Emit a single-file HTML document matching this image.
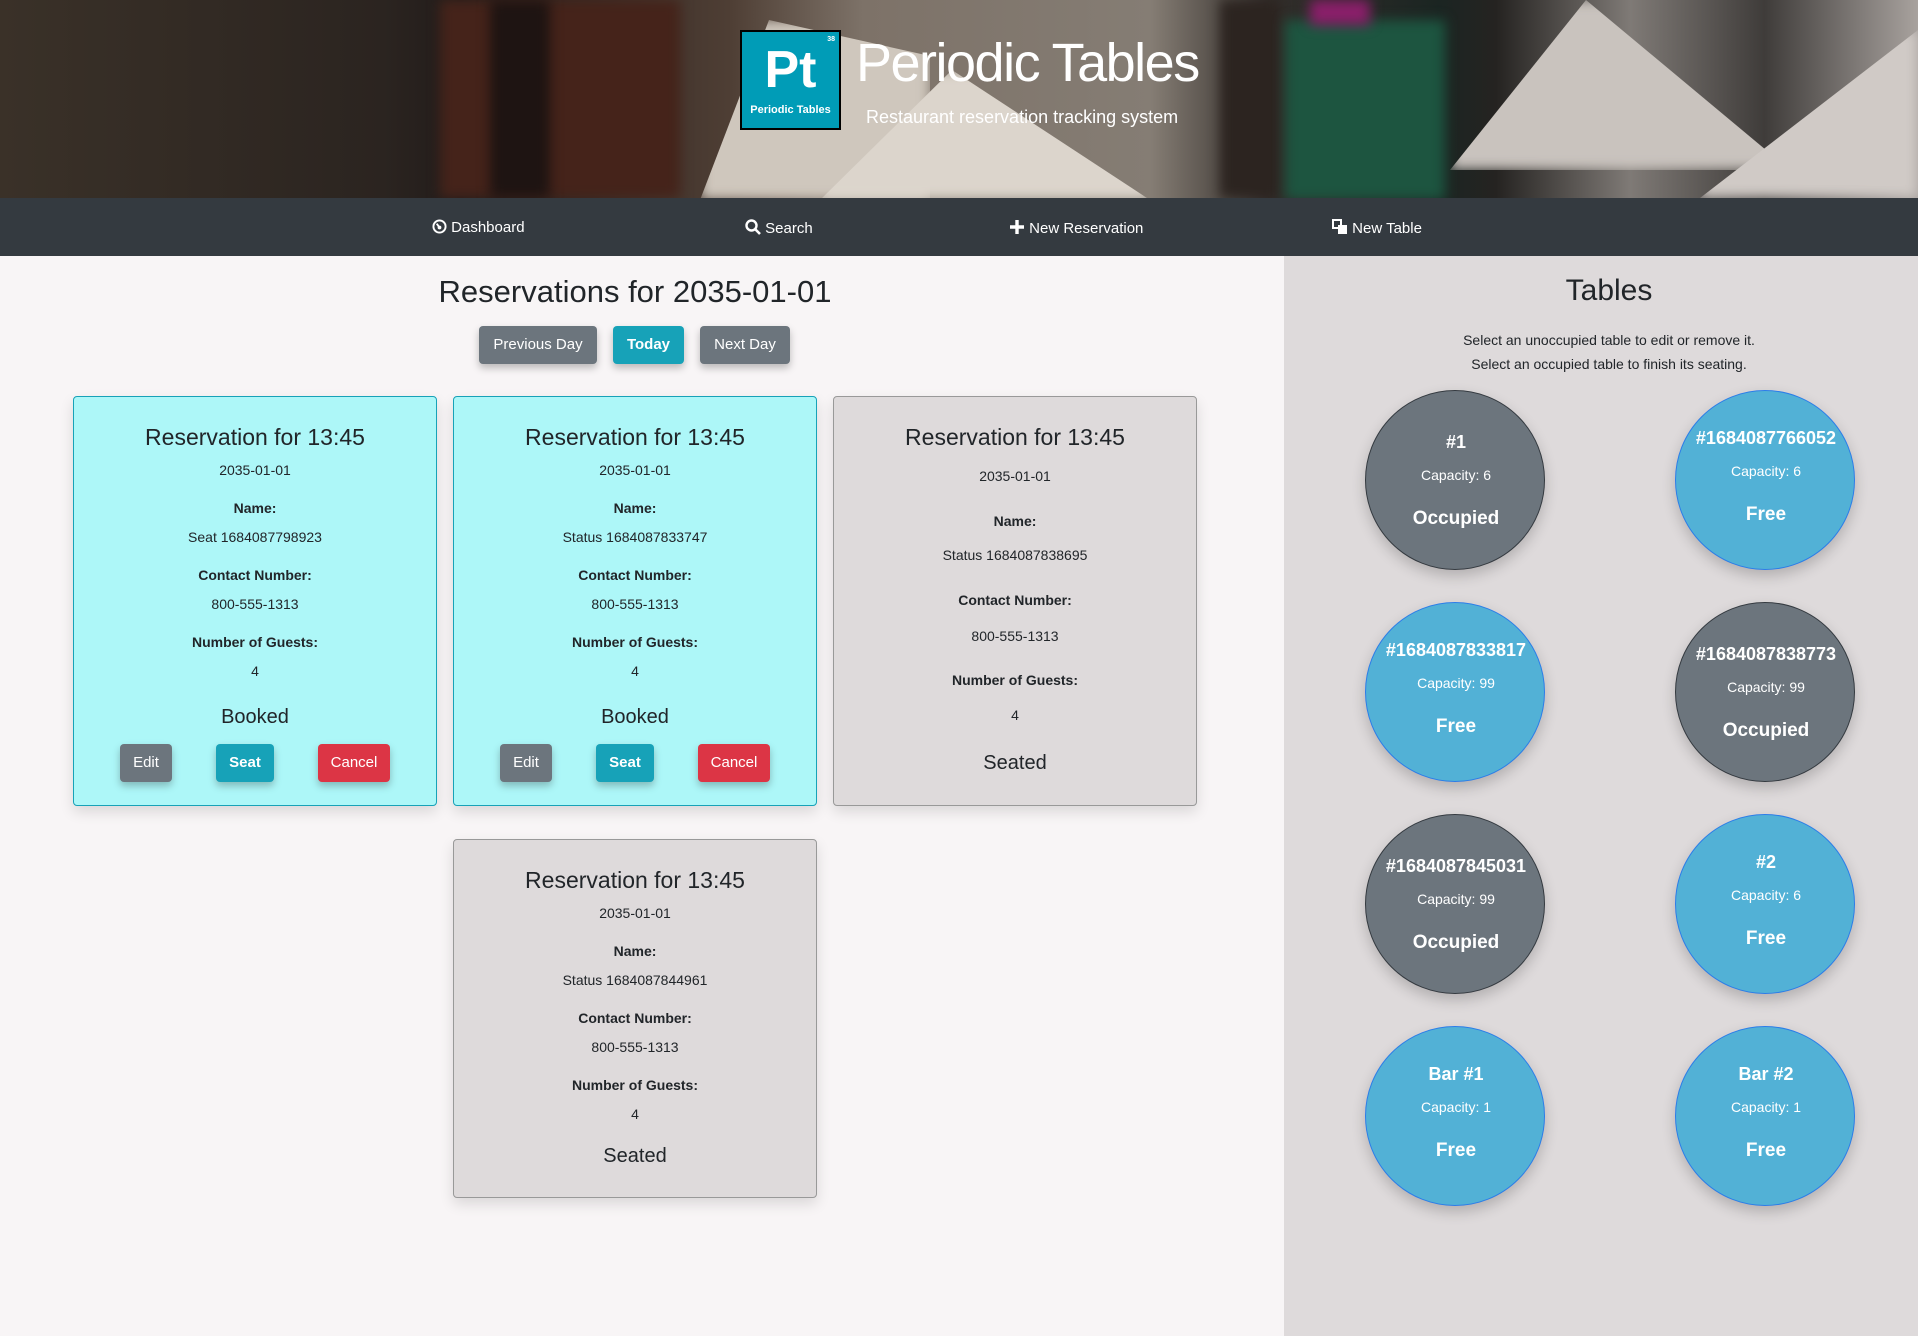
<!DOCTYPE html>
<html><head><meta charset="utf-8"><style>
*{box-sizing:border-box;margin:0;padding:0}
body{width:1918px;height:1336px;position:relative;overflow:hidden;background:#f8f5f6;font-family:"Liberation Sans",sans-serif;color:#212529}
.abs{position:absolute}
#hdr{left:0;top:0;width:1918px;height:198px;overflow:hidden;background:linear-gradient(90deg,#3a3128 0%,#2b2420 20%,#221c1a 24%,#4e3e34 38%,#7d7268 45%,#857d74 60%,#332e2b 66%,#1b2522 75%,#252321 78%,#7f7a76 85%,#3f3c3a 92%,#a8a29e 100%)}
#hdr .s{position:absolute;filter:blur(6px)}
.c{text-align:center;position:absolute}
#nav{left:0;top:198px;width:1918px;height:58px;background:#343a40;color:#fff;font-size:15px}
#nav span{position:absolute;top:21px;white-space:nowrap}
#side{left:1284px;top:256px;width:634px;height:1080px;background:#dedadb}
.btn{position:absolute;color:#fff;font-size:15px;text-align:center;border-radius:4px;box-shadow:0 4px 8px rgba(0,0,0,.25);line-height:38px}
.card{position:absolute;width:364px;border-radius:4px;box-shadow:0 6px 14px rgba(0,0,0,.12)}
.bk{background:#adf7f8;border:1px solid #17a2b8}
.st{background:#dedadb;border:1px solid #999}
.card div{position:absolute;left:0;width:100%;text-align:center;white-space:nowrap}
.t{font-size:23px}.v{font-size:14px}.l{font-size:14px;font-weight:bold}.s2{font-size:20px}
.circ{position:absolute;width:180px;height:180px;border-radius:50%;color:#fff;box-shadow:0 6px 14px rgba(0,0,0,.2)}
.oc{background:#6c757d;border:1px solid #343a40}
.fr{background:#52b1d6;border:1px solid #2b7de9}
.circ div{position:absolute;left:-20px;width:220px;text-align:center;white-space:nowrap}
.n{font-size:18px;font-weight:bold}.cp{font-size:14px}.ss{font-size:19px;font-weight:bold}
</style></head><body>
<div id="hdr" class="abs">
 <div class="s" style="left:440px;top:0;width:240px;height:198px;background:#45231a"></div>
 <div class="s" style="left:490px;top:0;width:60px;height:198px;background:#1e1412"></div>
 <div class="s" style="left:700px;top:20px;width:230px;height:180px;background:#cfc7bd;clip-path:polygon(30% 0,100% 20%,100% 100%,0 100%)"></div>
 <div class="s" style="left:820px;top:70px;width:330px;height:130px;background:#dcd5cc;clip-path:polygon(40% 0,100% 100%,0 100%)"></div>
 <div class="s" style="left:1220px;top:0;width:60px;height:198px;background:#2c2420"></div>
 <div class="s" style="left:1285px;top:20px;width:160px;height:180px;background:#1d5540"></div>
 <div class="s" style="left:1450px;top:0;width:340px;height:170px;background:#c9c3be;clip-path:polygon(40% 0,100% 100%,0 100%)"></div>
 <div class="s" style="left:1700px;top:30px;width:218px;height:168px;background:#d0cac6;clip-path:polygon(100% 0,100% 100%,0 100%)"></div>
 <div class="s" style="left:1310px;top:0;width:60px;height:25px;background:#8a1f6a"></div>
</div>
<div class="abs" style="left:740px;top:30px;width:101px;height:100px;background:#009cb7;border:2px solid #000;color:#fff">
 <div class="abs" style="right:4px;top:4px;font-size:7px;font-weight:bold">38</div>
 <div class="abs" style="left:0;width:100%;top:8px;text-align:center;font-size:52px;font-weight:bold;line-height:60px">Pt</div>
 <div class="abs" style="left:0;width:100%;top:72px;text-align:center;font-size:11px;font-weight:bold">Periodic Tables</div>
</div>
<div class="abs" style="left:856px;top:32px;font-size:54px;color:#fff;white-space:nowrap;letter-spacing:-1.5px">Periodic Tables</div>
<div class="abs" style="left:866px;top:107px;font-size:18px;color:#fff;white-space:nowrap">Restaurant reservation tracking system</div>

<div id="nav" class="abs">
 <span style="left:432px"><svg width="15" height="15" viewBox="0 0 16 16" style="vertical-align:-2px"><circle cx="8" cy="8" r="6.5" fill="none" stroke="#fff" stroke-width="2"/><circle cx="8" cy="9" r="2" fill="#fff"/><path d="M8 9L5 5" stroke="#fff" stroke-width="2"/></svg> Dashboard</span>
 <span style="left:745px"><svg width="16" height="16" viewBox="0 0 16 16" style="vertical-align:-2px"><circle cx="6.5" cy="6.5" r="5" fill="none" stroke="#fff" stroke-width="2.4"/><path d="M10 10L15 15" stroke="#fff" stroke-width="2.6"/></svg> Search</span>
 <span style="left:1009px"><svg width="16" height="16" viewBox="0 0 16 16" style="vertical-align:-2px"><path d="M8 1V15M1 8H15" stroke="#fff" stroke-width="3.4"/></svg> New Reservation</span>
 <span style="left:1332px"><svg width="16" height="16" viewBox="0 0 16 16" style="vertical-align:-2px"><rect x="1" y="1" width="8" height="8" fill="none" stroke="#fff" stroke-width="2"/><rect x="6" y="6" width="9" height="9" fill="#fff"/></svg> New Table</span>
</div>

<div class="c" style="left:0;width:1270px;top:274px;font-size:31px">Reservations for 2035-01-01</div>
<div class="btn" style="left:479px;top:326px;width:118px;background:#6c757d">Previous Day</div>
<div class="btn" style="left:613px;top:326px;width:71px;background:#17a2b8;font-weight:bold">Today</div>
<div class="btn" style="left:700px;top:326px;width:90px;background:#6c757d">Next Day</div>

<div class="card bk" style="left:73px;top:396px;height:410px">
 <div class="t" style="top:27px">Reservation for 13:45</div>
 <div class="v" style="top:65px">2035-01-01</div>
 <div class="l" style="top:103px">Name:</div>
 <div class="v" style="top:132px">Seat 1684087798923</div>
 <div class="l" style="top:170px">Contact Number:</div>
 <div class="v" style="top:199px">800-555-1313</div>
 <div class="l" style="top:237px">Number of Guests:</div>
 <div class="v" style="top:266px">4</div>
 <div class="s2" style="top:309px">Booked</div>
 <span class="btn" style="left:46px;top:347px;width:52px;background:#6c757d">Edit</span>
 <span class="btn" style="left:142px;top:347px;width:58px;background:#17a2b8;font-weight:bold">Seat</span>
 <span class="btn" style="left:244px;top:347px;width:72px;background:#dc3545">Cancel</span>
</div>
<div class="card bk" style="left:453px;top:396px;height:410px">
 <div class="t" style="top:27px">Reservation for 13:45</div>
 <div class="v" style="top:65px">2035-01-01</div>
 <div class="l" style="top:103px">Name:</div>
 <div class="v" style="top:132px">Status 1684087833747</div>
 <div class="l" style="top:170px">Contact Number:</div>
 <div class="v" style="top:199px">800-555-1313</div>
 <div class="l" style="top:237px">Number of Guests:</div>
 <div class="v" style="top:266px">4</div>
 <div class="s2" style="top:309px">Booked</div>
 <span class="btn" style="left:46px;top:347px;width:52px;background:#6c757d">Edit</span>
 <span class="btn" style="left:142px;top:347px;width:58px;background:#17a2b8;font-weight:bold">Seat</span>
 <span class="btn" style="left:244px;top:347px;width:72px;background:#dc3545">Cancel</span>
</div>
<div class="card st" style="left:833px;top:396px;height:410px">
 <div class="t" style="top:27px">Reservation for 13:45</div>
 <div class="v" style="top:71px">2035-01-01</div>
 <div class="l" style="top:116px">Name:</div>
 <div class="v" style="top:150px">Status 1684087838695</div>
 <div class="l" style="top:195px">Contact Number:</div>
 <div class="v" style="top:231px">800-555-1313</div>
 <div class="l" style="top:275px">Number of Guests:</div>
 <div class="v" style="top:310px">4</div>
 <div class="s2" style="top:355px">Seated</div>
</div>
<div class="card st" style="left:453px;top:839px;height:359px">
 <div class="t" style="top:27px">Reservation for 13:45</div>
 <div class="v" style="top:65px">2035-01-01</div>
 <div class="l" style="top:103px">Name:</div>
 <div class="v" style="top:132px">Status 1684087844961</div>
 <div class="l" style="top:170px">Contact Number:</div>
 <div class="v" style="top:199px">800-555-1313</div>
 <div class="l" style="top:237px">Number of Guests:</div>
 <div class="v" style="top:266px">4</div>
 <div class="s2" style="top:305px">Seated</div>
</div>

<div id="side" class="abs">
 <div class="c" style="left:0;width:650px;top:18px;font-size:30px">Tables</div>
 <div class="c" style="left:0;width:650px;top:72px;font-size:14px;line-height:24px">Select an unoccupied table to edit or remove it.<br>Select an occupied table to finish its seating.</div>
</div>

<div class="circ oc" style="left:1365px;top:390px"><div class="n" style="top:41px">#1</div><div class="cp" style="top:76px">Capacity: 6</div><div class="ss" style="top:117px">Occupied</div></div>
<div class="circ fr" style="left:1675px;top:390px"><div class="n" style="top:37px">#1684087766052</div><div class="cp" style="top:72px">Capacity: 6</div><div class="ss" style="top:113px">Free</div></div>
<div class="circ fr" style="left:1365px;top:602px"><div class="n" style="top:37px">#1684087833817</div><div class="cp" style="top:72px">Capacity: 99</div><div class="ss" style="top:113px">Free</div></div>
<div class="circ oc" style="left:1675px;top:602px"><div class="n" style="top:41px">#1684087838773</div><div class="cp" style="top:76px">Capacity: 99</div><div class="ss" style="top:117px">Occupied</div></div>
<div class="circ oc" style="left:1365px;top:814px"><div class="n" style="top:41px">#1684087845031</div><div class="cp" style="top:76px">Capacity: 99</div><div class="ss" style="top:117px">Occupied</div></div>
<div class="circ fr" style="left:1675px;top:814px"><div class="n" style="top:37px">#2</div><div class="cp" style="top:72px">Capacity: 6</div><div class="ss" style="top:113px">Free</div></div>
<div class="circ fr" style="left:1365px;top:1026px"><div class="n" style="top:37px">Bar #1</div><div class="cp" style="top:72px">Capacity: 1</div><div class="ss" style="top:113px">Free</div></div>
<div class="circ fr" style="left:1675px;top:1026px"><div class="n" style="top:37px">Bar #2</div><div class="cp" style="top:72px">Capacity: 1</div><div class="ss" style="top:113px">Free</div></div>
</body></html>
